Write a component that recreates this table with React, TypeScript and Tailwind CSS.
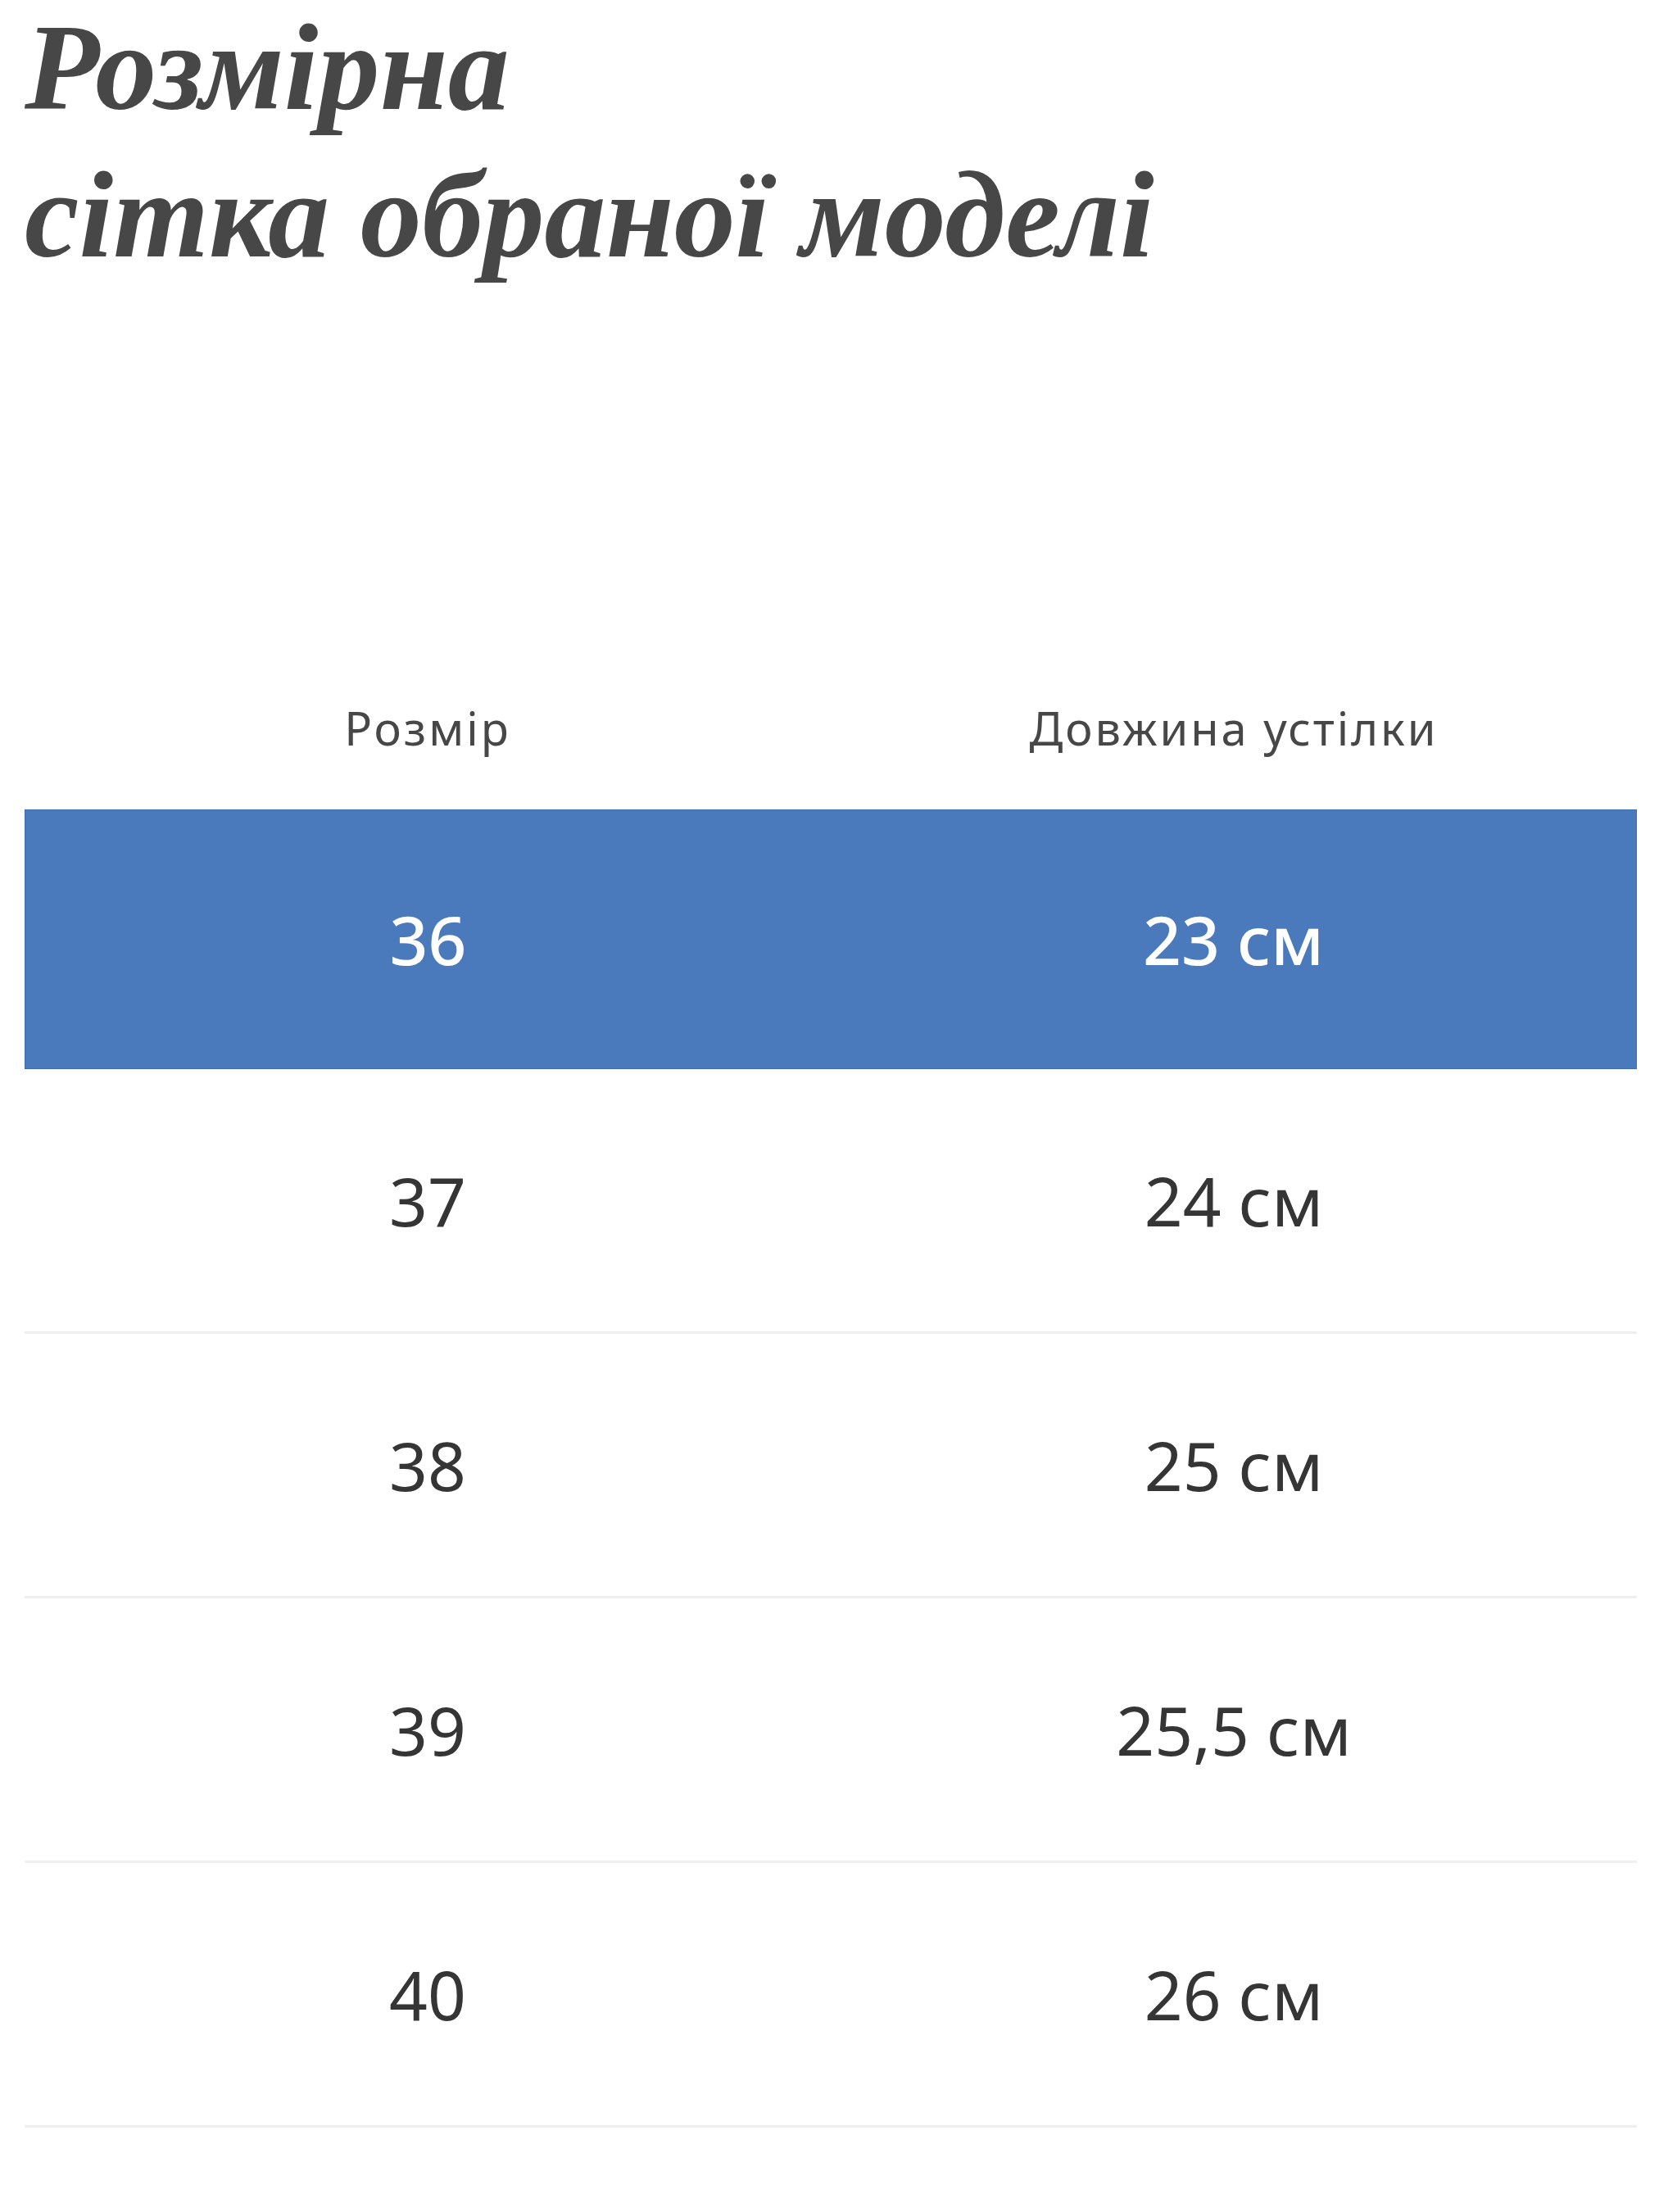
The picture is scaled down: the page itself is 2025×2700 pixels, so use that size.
const rows = [
  { size: '37', len: '24 см' },
  { size: '38', len: '25 см' },
  { size: '39', len: '25,5 см' },
  { size: '40', len: '26 см' },
];

const sans = { fontFamily: '"Noto Sans", Inter, sans-serif' };

export default function App() {
  return (
    <div className="min-h-[2700px] bg-white pl-[30px]">
      <h1
        className="text-[150px] font-bold italic leading-[180px] text-[#474747] -mt-[8px]"
        style={{ fontFamily: '"Liberation Serif", "DejaVu Serif", serif' }}
      >
        Розмірна
        <br />
        сітка обраної моделі
      </h1>

      <div className="mt-[436px] w-[1968px]" style={sans}>
        <div className="grid h-[200px] grid-cols-2 items-center text-center text-[56px] tracking-[3px] text-[#474747]">
          <div>Розмір</div>
          <div>Довжина устілки</div>
        </div>

        <div className="grid h-[317px] grid-cols-2 items-center border border-[#3f6db5] bg-[#4a79bc] text-center text-[82px] font-medium text-white">
          <div>36</div>
          <div>23 см</div>
        </div>

        {rows.map((r) => (
          <div
            key={r.size}
            className="grid h-[323px] grid-cols-2 items-center border-b-[3px] border-[#efefef] text-center text-[82px] text-[#353535]"
          >
            <div>{r.size}</div>
            <div>{r.len}</div>
          </div>
        ))}
      </div>
    </div>
  );
}
